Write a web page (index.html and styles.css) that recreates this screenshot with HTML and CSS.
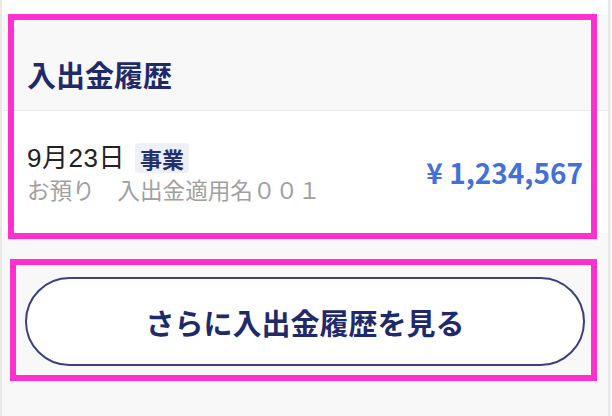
FILE: index.html
```html
<!DOCTYPE html>
<html lang="ja">
<head>
    <meta charset="UTF-8">
    <meta name="viewport" content="width=device-width, initial-scale=1.0">
    <title>入出金履歴</title>
    <link rel="stylesheet" href="styles.css">
</head>
<body>

    <div class="screen">
        <div class="top-gap"></div>

        <section class="history">
            <div class="history-head">
                <h2>入出金履歴</h2>
            </div>
            <div class="history-row">
                <div class="row-info">
                    <div class="row-date">
                        <span class="date">9月23日</span>
                        <span class="tag">事業</span>
                    </div>
                    <div class="row-desc">お預り　入出金適用名００１</div>
                </div>
                <div class="amount">¥ 1,234,567</div>
            </div>
        </section>

        <div class="more">
            <div class="more-mark"></div>
            <button class="more-btn">さらに入出金履歴を見る</button>
        </div>
    </div>

</body>
</html>
```

FILE: styles.css
```css
body {
    margin: 0;
    background-color: #f7f7f7;
    font-family: "Liberation Sans", "Noto Sans CJK JP", sans-serif;
}

.screen {
    width: 606px;
    height: 416px;
    border-left: 2px solid #e8e8e8;
    border-right: 2px solid #e8e8e8;
    background-color: #f8f8f8;
}

.top-gap {
    height: 14px;
    background-color: #fff;
}

.history {
    position: relative;
}

/* pink highlight boxes */
.history::after,
.more-mark {
    content: "";
    position: absolute;
    border: 6px solid #ff30cf;
    pointer-events: none;
}

.history::after {
    left: 6px;
    right: 11px;
    top: 0;
    bottom: -6px;
}

.history-head {
    padding: 46px 25px 21px;
    border-bottom: 1px solid #ebebeb;
}

.history-head h2 {
    margin: 0;
    font-family: "Noto Sans CJK JP", sans-serif;
    font-size: 29px;
    line-height: 29px;
    font-weight: bold;
    color: #1f2a6b;
}

.history-row {
    height: 122px;
    padding: 0 25px;
    display: flex;
    align-items: center;
    justify-content: space-between;
    background-color: #fff;
}

.row-info {
    padding-top: 4px;
}

.row-date {
    display: flex;
    align-items: center;
    gap: 10px;
}

.date {
    font-size: 26px;
    line-height: 30px;
    letter-spacing: 0.5px;
    color: #222;
}

.tag {
    padding: 0 5px;
    border-radius: 4px;
    background-color: #eef0f6;
    font-family: "Noto Sans CJK JP", sans-serif;
    font-size: 22px;
    line-height: 30px;
    font-weight: bold;
    color: #253070;
}

.row-desc {
    margin-top: 2px;
    font-family: "Noto Sans CJK JP", sans-serif;
    font-size: 22.6px;
    line-height: 30px;
    color: #a0a0a0;
}

.amount {
    font-family: "Noto Sans CJK JP", sans-serif;
    font-size: 28px;
    font-weight: bold;
    color: #4370d9;
}

.more {
    position: relative;
    padding: 44px 23px 0;
}

.more-mark {
    top: 26px;
    left: 8px;
    right: 11px;
    height: 110px;
}

.more-btn {
    display: block;
    width: 100%;
    height: 89px;
    border: 2px solid #3b4080;
    border-radius: 45px;
    background-color: #fff;
    font-family: "Noto Sans CJK JP", sans-serif;
    font-size: 29px;
    font-weight: bold;
    color: #1f2a6b;
    cursor: pointer;
}
```
